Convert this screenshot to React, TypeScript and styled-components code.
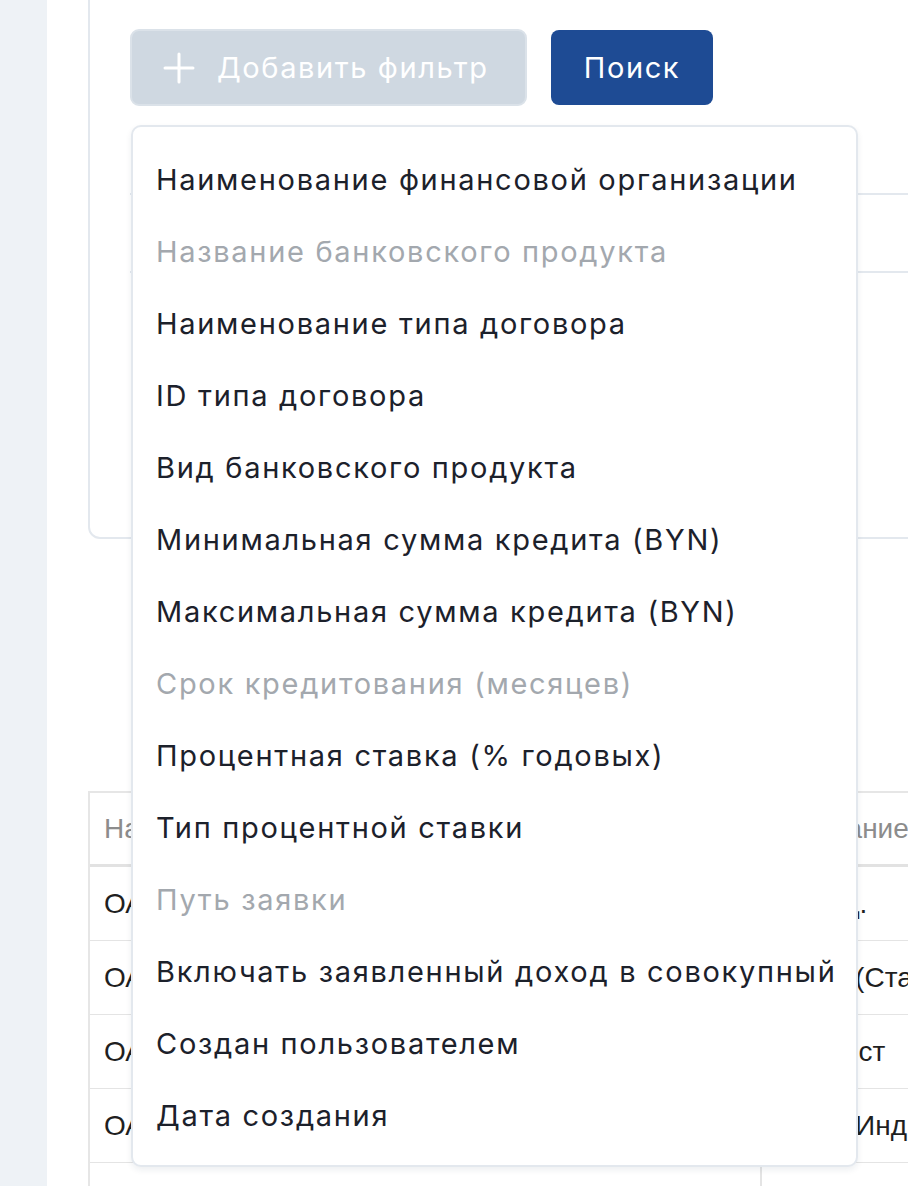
import React from "react";
import styled, { createGlobalStyle } from "styled-components";

const Global = createGlobalStyle`
  html, body { margin: 0; padding: 0; background: #ffffff; }
  body { font-family: Inter, "Noto Sans", sans-serif; overflow: hidden; }
`;

const Page = styled.div`
  display: flex;
  width: 908px;
  height: 1186px;
  overflow: hidden;
`;

const Sidebar = styled.div`
  flex: 0 0 47px;
  background: #eef2f6;
`;

const Main = styled.main`
  flex: 1;
  padding-left: 41px;
  overflow: hidden;
`;

const Card = styled.section`
  width: 1100px;
  margin-top: -20px;
  padding: 47px 0 264px 40px;
  border: 2px solid #e3e8ee;
  border-radius: 12px;
  box-sizing: border-box;
`;

const ButtonRow = styled.div`
  position: relative;
  display: flex;
  align-items: center;
  gap: 24px;
`;

const AddButton = styled.button`
  display: flex;
  align-items: center;
  gap: 22px;
  width: 397px;
  height: 77px;
  padding: 0 0 0 31px;
  box-sizing: border-box;
  background: #cfd8e1;
  border: 2px solid #dbe2e9;
  border-radius: 9px;
  color: #ffffff;
  font-family: Inter, sans-serif;
  font-size: 29px;
  letter-spacing: 1.6px;
  cursor: default;
`;

const SearchButton = styled.button`
  width: 162px;
  height: 75px;
  background: #1e4b94;
  border: none;
  border-radius: 8px;
  color: #ffffff;
  font-family: Inter, sans-serif;
  font-size: 29px;
  letter-spacing: 1.6px;
`;

const FilterArea = styled.div`
  margin-top: 87px;
  height: 76px;
  border-top: 2px solid #e3e8ee;
  border-bottom: 2px solid #e3e8ee;
`;

const Menu = styled.ul`
  position: absolute;
  left: 1px;
  top: 96px;
  width: 727px;
  height: 1042px;
  box-sizing: border-box;
  margin: 0;
  padding: 16px 0 0;
  list-style: none;
  background: #ffffff;
  border: 2px solid #e3e8ee;
  border-radius: 10px;
  box-shadow: 0 3px 6px rgba(30, 50, 80, 0.08);
  z-index: 10;
`;

const MenuItem = styled.li<{ $disabled?: boolean }>`
  height: 72px;
  display: flex;
  align-items: center;
  padding-left: 23px;
  font-family: Inter, sans-serif;
  font-size: 29px;
  letter-spacing: 1.7px;
  white-space: nowrap;
  color: ${(p) => (p.$disabled ? "#a3a8ae" : "#1c212b")};
`;

const Table = styled.div`
  margin-top: 252px;
  width: 1100px;
  border: 2px solid #e6e6e6;
  border-bottom: none;
  font-family: "Liberation Sans", Arial, sans-serif;
  font-size: 28px;
`;

const Row = styled.div<{ $head?: boolean }>`
  display: grid;
  grid-template-columns: 672px 1fr;
  height: ${(p) => (p.$head ? "71px" : "73px")};
  border-bottom: ${(p) => (p.$head ? "3px solid #e2e2e2" : "1px solid #e4e4e4")};
  color: ${(p) => (p.$head ? "#8c8c8c" : "#1f1f1f")};
`;

const Cell = styled.div<{ $first?: boolean }>`
  display: flex;
  align-items: center;
  padding-left: ${(p) => (p.$first ? "14px" : "18px")};
  white-space: nowrap;
  overflow: hidden;
  border-right: ${(p) => (p.$first ? "2px solid #e4e4e4" : "none")};
`;

const PlusIcon = () => (
  <svg width="32" height="32" viewBox="0 0 32 32" fill="none">
    <path d="M16 2v28M2 16h28" stroke="#ffffff" strokeWidth="3" strokeLinecap="round" />
  </svg>
);

const items: { label: string; disabled?: boolean }[] = [
  { label: "Наименование финансовой организации" },
  { label: "Название банковского продукта", disabled: true },
  { label: "Наименование типа договора" },
  { label: "ID типа договора" },
  { label: "Вид банковского продукта" },
  { label: "Минимальная сумма кредита (BYN)" },
  { label: "Максимальная сумма кредита (BYN)" },
  { label: "Срок кредитования (месяцев)", disabled: true },
  { label: "Процентная ставка (% годовых)" },
  { label: "Тип процентной ставки" },
  { label: "Путь заявки", disabled: true },
  { label: "Включать заявленный доход в совокупный" },
  { label: "Создан пользователем" },
  { label: "Дата создания" },
];

const rows = [
  ["ОАО «Белагропромбанк»", "Вклад."],
  ["ОАО «АСБ Беларусбанк»", "Заём (Стандарт)"],
  ["ОАО «Приорбанк»", "Тот тест"],
  ["ОАО «Банк Дабрабыт»", "Заём Индивидуальный"],
  ["ЗАО «Альфа-Банк»", "Кредит"],
];

export default function App() {
  return (
    <>
      <Global />
      <Page>
        <Sidebar />
        <Main>
          <Card>
            <ButtonRow>
              <AddButton type="button">
                <PlusIcon />
                Добавить фильтр
              </AddButton>
              <SearchButton type="button">Поиск</SearchButton>
              <Menu>
                {items.map((it) => (
                  <MenuItem key={it.label} $disabled={it.disabled}>
                    {it.label}
                  </MenuItem>
                ))}
              </Menu>
            </ButtonRow>
            <FilterArea />
          </Card>
          <Table>
            <Row $head>
              <Cell $first>Наименование финансовой организации</Cell>
              <Cell>Описание продукта</Cell>
            </Row>
            {rows.map((r) => (
              <Row key={r[0]}>
                <Cell $first>{r[0]}</Cell>
                <Cell>{r[1]}</Cell>
              </Row>
            ))}
          </Table>
        </Main>
      </Page>
    </>
  );
}
